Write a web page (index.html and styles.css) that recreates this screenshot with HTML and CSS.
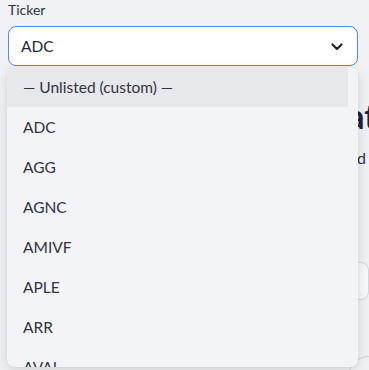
FILE: index.html
```html
<!DOCTYPE html>
<html lang="en">
<head>
<meta charset="utf-8">
<title>Ticker</title>
<link rel="stylesheet" href="styles.css">
</head>
<body>
<div class="page">
  <div class="field">
    <label class="label">Ticker</label>
    <div class="select">
      <span class="select-value">ADC</span>
      <svg class="chevron" width="12" height="8" viewBox="0 0 12 8"><path d="M1.5 1.5 L6 6 L10.5 1.5" fill="none" stroke="#1f2433" stroke-width="2.2" stroke-linecap="round" stroke-linejoin="round"/></svg>
    </div>
    <div class="menu">
      <ul class="options">
        <li class="option active">— Unlisted (custom) —</li>
        <li class="option">ADC</li>
        <li class="option">AGG</li>
        <li class="option">AGNC</li>
        <li class="option">AMIVF</li>
        <li class="option">APLE</li>
        <li class="option">ARR</li>
        <li class="option">AVAL</li>
      </ul>
    </div>
  </div>
  <div class="content">
    <h1 class="title">Dividend Stat</h1>
    <p class="note">Prices are refreshed</p>
    <div class="input-box"></div>
    <div class="chart"></div>
  </div>
</div>
</body>
</html>
```

FILE: styles.css
```css
html, body {
  margin: 0;
  padding: 0;
  background: #f0f2f6;
  overflow: hidden;
  width: 369px;
  height: 370px;
}
body {
  font-family: Lato, "Noto Sans", sans-serif;
  color: #31333f;
}
.page {
  padding: 0 11px 0 8px;
  position: relative;
}
.field {
  position: relative;
  z-index: 2;
}
.label {
  display: block;
  font-size: 14px;
  line-height: 20px;
  height: 26px;
  color: #31333f;
}
.select {
  box-sizing: border-box;
  height: 40px;
  width: 350px;
  border: 1px solid #4a8af5;
  border-radius: 8px;
  background: #ffffff;
  display: flex;
  align-items: center;
  justify-content: space-between;
  padding: 0 14px 0 12px;
}
.select-value {
  font-size: 15.5px;
  color: #232838;
}
.chevron {
  display: block;
  margin-top: 1px;
}
.menu {
  position: absolute;
  top: 67px;
  left: -1px;
  width: 351px;
  height: 300px;
  background: #f3f4f6;
  border-radius: 8px;
  box-shadow: 0 4px 14px rgba(0, 0, 0, 0.13), 0 0 3px rgba(0, 0, 0, 0.05);
  overflow: hidden;
}
.options {
  list-style: none;
  margin: 0;
  padding: 0 10px 0 0;
}
.option {
  height: 40px;
  line-height: 40px;
  padding-left: 16px;
  font-size: 15.5px;
  color: #31333f;
}
.option.active {
  background: #e6e8eb;
}
.content {
  position: relative;
  z-index: 1;
}
.title {
  margin: 0;
  margin-top: 30px;
  width: 377px;
  margin-left: -8px;
  text-align: right;
  white-space: nowrap;
  font-size: 34px;
  line-height: 40px;
  font-weight: 700;
  color: #1c2340;
}
.note {
  margin: 12px 0 0 -8px;
  width: 366px;
  text-align: right;
  white-space: nowrap;
  font-size: 16px;
  line-height: 20px;
  color: #31333f;
}
.input-box {
  margin: 94px 0 0 300px;
  width: 61px;
  height: 38px;
  box-sizing: border-box;
  border: 1px solid #d5d7dc;
  border-radius: 8px;
  background: #f8f9fb;
}
.chart {
  margin: 56px 0 0 340px;
  width: 40px;
  height: 40px;
  border: 1px solid #cfd2d7;
  border-radius: 50%;
}
```
